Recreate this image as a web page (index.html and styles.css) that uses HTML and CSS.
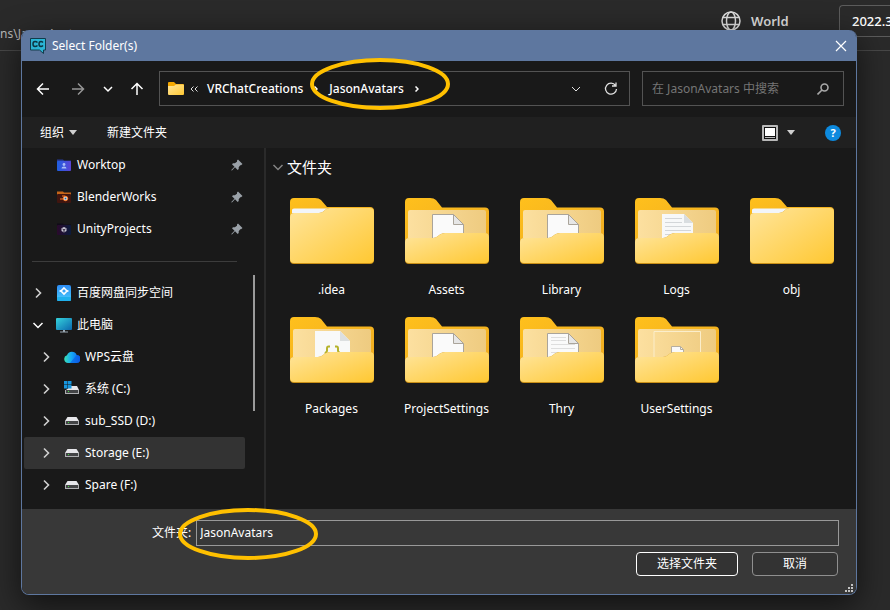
FILE: index.html
```html
<!DOCTYPE html>
<html lang="zh-CN">
<head>
<meta charset="utf-8">
<title>Select Folder(s)</title>
<link rel="stylesheet" href="styles.css">
</head>
<body>
<svg class="defs" width="0" height="0" aria-hidden="true">
  <defs>
    <linearGradient id="front" x1="0" y1="0" x2="1" y2="1"><stop offset="0" stop-color="#ffe59c"/><stop offset="1" stop-color="#ffc832"/></linearGradient>
    <linearGradient id="back" x1="0" y1="0" x2="1" y2="1"><stop offset="0" stop-color="#ffc01c"/><stop offset="1" stop-color="#eeab22"/></linearGradient>
    <linearGradient id="inner" x1="0" y1="0" x2="1" y2="0"><stop offset="0" stop-color="#fce0a0"/><stop offset="1" stop-color="#eecb80"/></linearGradient>
    <linearGradient id="screen" x1="0" y1="0" x2="1" y2="1"><stop offset="0" stop-color="#35d3dc"/><stop offset="1" stop-color="#0b67ae"/></linearGradient>
    <linearGradient id="sync" x1="0" y1="0" x2="0" y2="1"><stop offset="0" stop-color="#2c8cf5"/><stop offset="1" stop-color="#4ccdfb"/></linearGradient>
    <linearGradient id="cloud" x1="0" y1="0" x2="1" y2="0"><stop offset="0" stop-color="#39e0b4"/><stop offset=".45" stop-color="#16a9f5"/><stop offset="1" stop-color="#0b5ce8"/></linearGradient>
    <linearGradient id="work" x1="0" y1="0" x2="1" y2="0"><stop offset="0" stop-color="#1f5fe0"/><stop offset="1" stop-color="#5b45d6"/></linearGradient>
    <linearGradient id="unity" x1="0" y1="0" x2="1" y2="0"><stop offset="0" stop-color="#2a0a2c"/><stop offset="1" stop-color="#0c1a3c"/></linearGradient>
  </defs>
  <symbol id="folder-back" viewBox="0 0 84 66">
    <path d="M0 4Q0 0 4 0H25Q29 0 31 2L37 9.500H80Q84 9.500 84 13.500V50H0Z" fill="url(#back)"/>
    <path d="M3 42V14Q3 12 5 12H79Q81 12 81 14V42Z" fill="url(#inner)"/>
  </symbol>
  <symbol id="folder-front" viewBox="0 0 84 66">
    <path d="M0 44Q0 40 4 40H28Q31 40 33 38L35 36.500Q37 35 40 35H80Q84 35 84 39V62Q84 66 80 66H4Q0 66 0 62Z" fill="#c98f17"/>
    <path d="M0 44Q0 40 4 40H28Q31 40 33 38L35 36.500Q37 35 40 35H80Q84 35 84 39V61Q84 65 80 65H4Q0 65 0 61Z" fill="url(#front)"/>
  </symbol>
  <symbol id="folder-closed" viewBox="0 0 84 66">
    <path d="M0 4Q0 0 4 0H25Q29 0 31 2L37 9H80Q84 9 84 13V30H0Z" fill="url(#back)"/>
    <path d="M2 20V12Q2 10.500 4 10.500H38L34 18Z" fill="#f2f5fa"/>
    <path d="M0 19Q0 15 4 15H29Q32 15 34 13L35 12Q37 10 40 10H80Q84 10 84 14V62Q84 66 80 66H4Q0 66 0 62Z" fill="#c98f17"/>
    <path d="M0 19Q0 15 4 15H29Q32 15 34 13L35 12Q37 10 40 10H80Q84 10 84 14V61Q84 65 80 65H4Q0 65 0 61Z" fill="url(#front)"/>
  </symbol>
  <symbol id="sheet" viewBox="0 0 84 66">
    <path d="M27.500 42V16.500H48.500L58.500 26.500V42Z" fill="#fafafa" stroke="#aaa49a"/>
    <path d="M48.500 16.500V26.500H58.500Z" fill="#e6e6e6" stroke="#aaa49a"/>
  </symbol>
  <symbol id="drive" viewBox="0 0 16 16">
    <path d="M3.500 4H12.500L15 8H1Z" fill="#e6e6ea"/><rect x="1" y="8" width="14" height="4" fill="#aeafb2"/><rect x="2" y="8" width="12" height="3" fill="#434446"/><rect x="4" y="9" width="1" height="1" fill="#3fe03f"/>
  </symbol>
  <symbol id="pin" viewBox="0 0 12 12">
    <path d="M7 .500L11.500 5L10 6.200H9.200L7.700 8.200V10L6.700 11L4 8.300L1.200 11.300L.300 11.500L.500 10.700L3.500 7.800L1 5.300L2 4.300H3.800L6 2.700V1.500Z" fill="#9aa1a8"/>
  </symbol>
  <symbol id="chev-right" viewBox="0 0 12 12"><path d="M4 1.500L8.500 6L4 10.500" fill="none" stroke="#d0d0d0" stroke-width="1.600"/></symbol>
  <symbol id="chev-down" viewBox="0 0 12 12"><path d="M1.500 4L6 8.500L10.500 4" fill="none" stroke="currentColor" stroke-width="1.500"/></symbol>
</svg>

<header class="app-bar">
  <span class="app-path">ns\JasonAvatars</span>
  <div class="app-tools">
    <svg class="globe" viewBox="0 0 20 20" aria-hidden="true"><g fill="none" stroke="#dcdcdc" stroke-width="1.500"><circle cx="10" cy="10" r="9"/><ellipse cx="10" cy="10" rx="4.500" ry="9"/><path d="M2 6.500H18M2 13.500H18"/></g></svg>
    <span class="app-kind">World</span>
    <button class="version" type="button">2022.3</button>
  </div>
</header>

<main class="dialog" role="dialog" aria-labelledby="dialog-title">
  <div class="titlebar">
    <svg class="logo" viewBox="0 0 16 16" aria-hidden="true"><path d="M.500 .500H15.500V12H13.500V15.500L9.500 12H.500Z" fill="#2bb4d4" stroke="#123c4c"/><path d="M7.500 4.500Q6.500 3.500 5 3.500Q3 3.500 3 6T5 8.500Q6.500 8.500 7.500 7.500M13 4.500Q12 3.500 11 3.500Q9 3.500 9 6T11 8.500Q12 8.500 13 7.500" fill="none" stroke="#0d3542" stroke-width="1.500"/></svg>
    <h1 id="dialog-title">Select Folder(s)</h1>
    <button class="close" type="button" aria-label="关闭"><svg viewBox="0 0 12 12"><path d="M1 1L11 11M11 1L1 11" stroke="#fff" stroke-width="1.200"/></svg></button>
  </div>

  <div class="navbar">
    <div class="nav-buttons">
      <button class="nav-back" type="button" aria-label="后退"><svg viewBox="0 0 14 14"><path d="M13 7H1.500M7 1.500L1.500 7L7 12.500"/></svg></button>
      <button class="nav-next" type="button" aria-label="前进"><svg viewBox="0 0 14 14"><path d="M1 7H12.500M7 1.500L12.500 7L7 12.500"/></svg></button>
      <button class="nav-recent" type="button" aria-label="最近位置"><svg viewBox="0 0 14 14"><path d="M3 5L7 9L11 5"/></svg></button>
      <button class="nav-up" type="button" aria-label="上移"><svg viewBox="0 0 14 14"><path d="M7 13V1.500M1.500 7L7 1.500L12.500 7"/></svg></button>
    </div>
    <div class="address">
      <svg class="mini-folder" viewBox="0 0 16 13" aria-hidden="true"><path d="M0 1Q0 0 1 0H6L8 2H15Q16 2 16 3V8H0Z" fill="#f5a800"/><path d="M0 4H6L8 2.500H15Q16 2.500 16 3.500V12Q16 13 15 13H1Q0 13 0 12Z" fill="url(#front)"/></svg>
      <svg class="more" viewBox="0 0 8 6" aria-hidden="true"><path d="M3.500 .500L1 3L3.500 5.500M7.500 .500L5 3L7.500 5.500"/></svg>
      <a class="crumb" href="#">VRChatCreations</a>
      <svg class="sep" viewBox="0 0 4 6" aria-hidden="true"><path d="M.500 .500L3 3L.500 5.500"/></svg>
      <a class="crumb" href="#">JasonAvatars</a>
      <svg class="sep" viewBox="0 0 4 6" aria-hidden="true"><path d="M.500 .500L3 3L.500 5.500"/></svg>
      <button class="history" type="button" aria-label="以前的位置"><svg viewBox="0 0 12 12"><path d="M2 4L6 8L10 4"/></svg></button>
      <button class="refresh" type="button" aria-label="刷新"><svg viewBox="0 0 14 14"><path d="M11.500 3.500A5.500 5.500 0 1 0 12.500 7M8 4H12V.500"/></svg></button>
      <svg class="mark mark-address" viewBox="0 0 140 52" aria-hidden="true"><ellipse cx="70" cy="26" rx="68" ry="24"/></svg>
    </div>
    <label class="search">
      <input type="search" placeholder="在 JasonAvatars 中搜索" aria-label="搜索">
      <svg viewBox="0 0 12 12" aria-hidden="true"><circle cx="7.500" cy="4.500" r="3.500"/><path d="M5 7L.500 11.500"/></svg>
    </label>
  </div>

  <div class="toolbar">
    <button class="organize" type="button">组织 <span class="caret"></span></button>
    <button class="new-folder" type="button">新建文件夹</button>
    <button class="view" type="button" aria-label="更改视图"><svg viewBox="0 0 16 16"><rect width="16" height="16" rx="1" fill="#b8b8b8"/><rect x="2" y="2" width="12" height="12" fill="#111"/><rect x="3" y="3" width="10" height="8" fill="#fff"/><rect x="3" y="12" width="10" height="1" fill="#b8b8b8"/></svg><span class="caret"></span></button>
    <button class="help" type="button" aria-label="帮助">?</button>
  </div>

  <div class="body">
    <nav class="sidebar">
      <ul class="tree">
        <li class="row pinned"><svg class="ico" viewBox="0 0 16 16"><path d="M1 2.500H7L8 3.500H15V8H1Z" fill="#273b98"/><rect x="1" y="4" width="14" height="10" rx="1" fill="url(#work)"/><circle cx="8" cy="7.500" r="1.400" fill="#a9bdf5"/><path d="M5.500 11.500Q5.500 9.500 8 9.500T10.500 11.500Z" fill="#a9bdf5"/></svg><span>Worktop</span><svg class="pin"><use href="#pin"/></svg></li>
        <li class="row pinned"><svg class="ico" viewBox="0 0 16 16"><path d="M1 2.500H7L8 3.500H15V6H1Z" fill="#c56518"/><rect x="1" y="5" width="14" height="9" rx="1" fill="#40150f"/><path d="M4 10H7M6 7H9" stroke="#ff7a22" stroke-width="1.200" fill="none"/><circle cx="9.500" cy="9.500" r="2.200" fill="#e8eef5" stroke="#ff7a22"/><circle cx="9.500" cy="9.500" r="1" fill="#256a9e"/></svg><span>BlenderWorks</span><svg class="pin"><use href="#pin"/></svg></li>
        <li class="row pinned"><svg class="ico" viewBox="0 0 16 16"><path d="M1 2.500H7L8 3.500H15V8H1Z" fill="#100b19"/><rect x="1" y="4" width="14" height="10" rx="1" fill="url(#unity)"/><path d="M8 6L10.500 7.200V10L8 11.500L5.500 10V7.200Z" fill="#c9c6d4"/><path d="M8 9V11M8 9L6.500 8M8 9L9.500 8" stroke="#2a2036"/></svg><span>UnityProjects</span><svg class="pin"><use href="#pin"/></svg></li>
        <li class="rule" role="separator"></li>
        <li class="row"><svg class="arrow"><use href="#chev-right"/></svg><svg class="ico" viewBox="0 0 16 16"><rect x="1" y="0" width="14" height="16" rx="2" fill="url(#sync)"/><rect x="1" y="12" width="14" height="4" rx="1" fill="#20b0ec"/><path d="M8 3L11 6L8 9L5 6Z" fill="none" stroke="#fff" stroke-width="1.600"/><path d="M3.500 6H5M11 6H12.500" stroke="#fff" stroke-width="1.500"/></svg><span>百度网盘同步空间</span></li>
        <li class="row"><svg class="arrow"><use href="#chev-down"/></svg><svg class="ico" viewBox="0 0 16 16"><rect x="0" y="1" width="16" height="12" rx="1" fill="url(#screen)"/><path d="M7 13H9V14.500H12V15.500H4V14.500H7Z" fill="#9aa8b4"/></svg><span>此电脑</span></li>
        <li class="row child"><svg class="arrow"><use href="#chev-right"/></svg><svg class="ico" viewBox="0 0 16 16"><path d="M4 14A4 4 0 0 1 3 6.200A5.200 5.200 0 0 1 12.700 6A4 4 0 0 1 12 14Z" fill="url(#cloud)"/><path d="M6 14L12.700 6A4 4 0 0 1 12 14Z" fill="#0a5ae6" opacity=".6"/></svg><span>WPS云盘</span></li>
        <li class="row child"><svg class="arrow"><use href="#chev-right"/></svg><svg class="ico" viewBox="0 0 16 16"><path d="M7 5H13L15 9H2Z" fill="#e6e6ea"/><rect x="1" y="9" width="14" height="4" fill="#aeafb2"/><rect x="2" y="9" width="12" height="3" fill="#434446"/><rect x="4" y="10" width="1" height="1" fill="#3fe03f"/><path d="M0 0H3.500V3.500H0ZM4 0H7.500V3.500H4ZM0 4H3.500V7.500H0ZM4 4H7.500V7.500H4Z" fill="#1795dd"/></svg><span>系统 (C:)</span></li>
        <li class="row child"><svg class="arrow"><use href="#chev-right"/></svg><svg class="ico"><use href="#drive"/></svg><span>sub_SSD (D:)</span></li>
        <li class="row child selected"><svg class="arrow"><use href="#chev-right"/></svg><svg class="ico"><use href="#drive"/></svg><span>Storage (E:)</span></li>
        <li class="row child"><svg class="arrow"><use href="#chev-right"/></svg><svg class="ico"><use href="#drive"/></svg><span>Spare (F:)</span></li>
      </ul>
      <div class="scroll"><div class="thumb"></div></div>
    </nav>

    <section class="content">
      <h2><svg viewBox="0 0 12 12" aria-hidden="true"><use href="#chev-down"/></svg>文件夹</h2>
      <ul class="tiles">
        <li><svg><use href="#folder-closed"/></svg><span>.idea</span></li>
        <li><svg viewBox="0 0 84 66"><use href="#folder-back"/><use href="#sheet"/><use href="#folder-front"/></svg><span>Assets</span></li>
        <li><svg viewBox="0 0 84 66"><use href="#folder-back"/><use href="#sheet"/><use href="#folder-front"/></svg><span>Library</span></li>
        <li><svg viewBox="0 0 84 66"><use href="#folder-back"/><path d="M27 42V16H49L58 25V42Z" fill="#f7f8f9"/><path d="M49 16V25H58Z" fill="#d9dde0"/><path d="M30 20.500H47M30 24.500H47M30 28.500H56M30 32.500H56M30 36.500H56" stroke="#d3d6d9"/><use href="#folder-front"/></svg><span>Logs</span></li>
        <li><svg><use href="#folder-closed"/></svg><span>obj</span></li>
        <li><svg viewBox="0 0 84 66"><use href="#folder-back"/><path d="M25 42V14H50L60 24V42Z" fill="#f8f9f9"/><path d="M50 14V24H60Z" fill="#dcdfe0"/><path d="M40 29.500H38.500Q37 29.500 37 31.500V34L35.500 36L37 38M45 29.500H46.500Q48 29.500 48 31.500V34L49.500 36L48 38" fill="none" stroke="#b5b32c" stroke-width="2"/><use href="#folder-front"/></svg><span>Packages</span></li>
        <li><svg viewBox="0 0 84 66"><use href="#folder-back"/><use href="#sheet"/><use href="#folder-front"/></svg><span>ProjectSettings</span></li>
        <li><svg viewBox="0 0 84 66"><use href="#folder-back"/><use href="#sheet"/><path d="M31 20.500H46M31 23.500H46M31 27.500H55M31 31.500H55M31 35.500H55" stroke="#dedede"/><use href="#folder-front"/></svg><span>Thry</span></li>
        <li><svg viewBox="0 0 84 66"><use href="#folder-back"/><path d="M19 42V14.500H65.500V42" fill="none" stroke="#fbeecb"/><path d="M36.500 40V29.500H45.500L48.500 32.500V40Z" fill="#fafafa" stroke="#b5aea0"/><path d="M45.500 29.500V32.500H48.500" fill="none" stroke="#b5aea0"/><use href="#folder-front"/></svg><span>UserSettings</span></li>
      </ul>
    </section>
  </div>

  <form class="footer">
    <div class="name-row">
      <label for="folder-name">文件夹:</label>
      <input id="folder-name" type="text" value="JasonAvatars">
      <svg class="mark mark-name" viewBox="0 0 140 52" aria-hidden="true"><ellipse cx="70" cy="26" rx="68" ry="24"/></svg>
    </div>
    <div class="actions">
      <button class="primary" type="button">选择文件夹</button>
      <button class="cancel" type="button">取消</button>
    </div>
    <svg class="grip" viewBox="0 0 8 8" aria-hidden="true"><path d="M6 0H8V2H6ZM3 3H5V5H3ZM6 3H8V5H6ZM0 6H2V8H0ZM3 6H5V8H3ZM6 6H8V8H6Z" fill="#c4c4c4"/></svg>
  </form>
</main>
</body>
</html>
```
FILE: styles.css
```css
* {
  box-sizing: border-box;
}

body {
  margin: 0;
  min-height: 100vh;
  overflow: hidden;
  background: #2a2a2a;
  color: #fff;
  font: 12px/16px "Noto Sans", "Noto Sans CJK SC", sans-serif;
}

ul,
h1,
h2 {
  margin: 0;
  padding: 0;
  list-style: none;
  font-weight: 400;
}

button,
input {
  margin: 0;
  padding: 0;
  border: 0;
  background: none;
  color: inherit;
  font: inherit;
}

svg {
  display: block;
  flex: none;
}

.defs {
  position: absolute;
}

/* Window behind the dialog */
.app-bar {
  display: flex;
  justify-content: space-between;
  height: 51px;
  overflow: hidden;
  border-bottom: 1px solid #484848;
}

.app-path {
  padding-top: 26px;
  color: #b8b8b8;
}

.app-tools {
  display: flex;
  align-items: center;
  height: 42px;
}

.globe {
  width: 20px;
  height: 20px;
  margin-right: 10px;
}

.app-kind {
  width: 88px;
  color: #dcdcdc;
  font-size: 13px;
  font-weight: 600;
}

.version {
  width: 51px;
  height: 32px;
  padding-left: 12px;
  border: 1px solid #5c5c5c;
  border-right: 0;
  border-radius: 4px 0 0 4px;
  font-size: 13px;
  font-weight: 500;
  text-align: left;
}

/* Dialog */
.dialog {
  position: absolute;
  inset: 30px 33px 15px 21px;
  display: flex;
  flex-direction: column;
  border: 1px solid #5e779f;
  border-top: 0;
  border-radius: 8px;
  background: #191919;
  box-shadow: 0 10px 32px rgba(0, 0, 0, 0.6);
}

.titlebar {
  display: flex;
  align-items: center;
  gap: 6px;
  height: 31px;
  padding: 0 7px 0 8px;
  border-radius: 7px 7px 0 0;
  background: #5e779f;
}

.titlebar h1 {
  flex: 1;
  font-size: 12px;
}

.logo {
  width: 16px;
  height: 16px;
}

.close svg {
  width: 12px;
  height: 12px;
  margin: 2px;
}

.navbar {
  display: flex;
  padding: 10px 12px 11px 3px;
}

.nav-buttons {
  display: flex;
  margin-right: 6px;
}

.nav-buttons button {
  display: grid;
  place-items: center;
  height: 35px;
}

.nav-buttons svg {
  width: 14px;
  height: 14px;
  fill: none;
  stroke: #fff;
  stroke-width: 1.5;
}

.nav-back {
  width: 36px;
}

.nav-next {
  width: 34px;
}

.nav-buttons .nav-next svg {
  stroke: #969696;
}

.nav-recent {
  width: 26px;
}

.nav-up {
  width: 32px;
}

.address {
  position: relative;
  display: flex;
  flex: 1;
  align-items: center;
  height: 35px;
  padding: 0 11px 0 8px;
  border: 1px solid #535353;
}

.mini-folder {
  width: 16px;
  height: 13px;
  margin-right: 6px;
}

.address path {
  fill: none;
  stroke: #e0e0e0;
}

.address .mini-folder path {
  stroke: none;
  fill: #f5a800;
}

.address .mini-folder path + path {
  fill: url(#front);
}

.more {
  width: 8px;
  height: 6px;
  margin-right: 9px;
}

.crumb {
  color: #fff;
  font-weight: 500;
  text-decoration: none;
}

.sep {
  width: 4px;
  height: 6px;
  margin: 0 11px;
}

.address .sep path {
  stroke: #fff;
  stroke-width: 1.5;
}

.history {
  margin-left: auto;
}

.history svg {
  width: 12px;
  height: 12px;
}

.refresh {
  margin-left: 22px;
}

.refresh svg {
  width: 14px;
  height: 14px;
}

.refresh path {
  stroke-width: 1.3;
}

.search {
  display: flex;
  align-items: center;
  width: 202px;
  height: 35px;
  margin-left: 12px;
  padding: 0 14px 0 9px;
  border: 1px solid #535353;
}

.search input {
  flex: 1;
  min-width: 0;
  outline: 0;
}

.search input::placeholder {
  color: #757575;
}

.search svg {
  width: 12px;
  height: 12px;
  fill: none;
  stroke: #a8a8a8;
  stroke-width: 1.6;
}

.toolbar {
  display: flex;
  align-items: center;
  height: 31px;
  padding: 0 15px 0 18px;
  background: #202020;
}

.toolbar button {
  display: flex;
  align-items: center;
}

.caret {
  border: 4px solid transparent;
  border-top: 5px solid #d0d0d0;
  border-bottom: 0;
}

.organize {
  gap: 5px;
  margin-right: 30px;
}

.view {
  gap: 9px;
  margin-left: auto;
}

.view svg {
  width: 16px;
  height: 16px;
}

.toolbar .help {
  justify-content: center;
  width: 16px;
  height: 16px;
  margin-left: 30px;
  border-radius: 50%;
  background: #0d8ade;
  font-size: 11px;
  font-weight: 700;
}

.body {
  display: flex;
  flex: 1;
  min-height: 0;
}

.sidebar {
  display: flex;
  width: 244px;
  padding: 1px 9px 0 2px;
  border-right: 2px solid #2a2a2a;
}

.tree {
  flex: 1;
}

.row {
  display: flex;
  align-items: center;
  height: 32px;
  padding: 0 2px 0 8px;
}

.pinned {
  padding-left: 32px;
}

.child {
  padding-left: 16px;
}

.selected {
  border-radius: 2px;
  background: #333;
}

.arrow {
  width: 12px;
  height: 12px;
  margin-right: 12px;
}

.ico {
  width: 16px;
  height: 16px;
  margin-right: 5px;
}

.pin {
  width: 12px;
  height: 12px;
  margin-left: auto;
}

.rule {
  height: 32px;
  padding: 16px 8px 0;
}

.rule::before {
  display: block;
  height: 1px;
  background: #3c3c3c;
  content: "";
}

.scroll {
  width: 10px;
  padding: 126px 0 0 8px;
}

.thumb {
  width: 2px;
  height: 136px;
  background: #9a9a9a;
}

.content {
  flex: 1;
  padding: 7px 0 0 6px;
}

.content h2 {
  display: flex;
  align-items: center;
  gap: 3px;
  height: 24px;
  font-size: 15px;
}

.content h2 svg {
  width: 12px;
  height: 12px;
  color: #858585;
}

.tiles {
  display: grid;
  grid-template-columns: repeat(auto-fill, 115px);
  grid-auto-rows: 119px;
  margin: 19px 0 0 2px;
}

.tiles li {
  display: flex;
  flex-direction: column;
  align-items: center;
  gap: 18px;
}

.tiles svg {
  width: 84px;
  height: 66px;
}

/* Folder name and actions */
.footer {
  position: relative;
  height: 85px;
  padding: 11px 17px 0 130px;
  border-radius: 0 0 7px 7px;
  background: #383838;
}

.name-row {
  position: relative;
  display: flex;
  align-items: center;
  gap: 5px;
}

.name-row input {
  flex: 1;
  height: 26px;
  padding: 0 3px 2px;
  border: 1px solid #999;
}

.actions {
  display: flex;
  justify-content: flex-end;
  gap: 14px;
  padding: 6px 1px 0 0;
}

.actions button {
  height: 24px;
  border: 1px solid #8f8f8f;
  border-radius: 4px;
  background: #333;
}

.actions .primary {
  width: 102px;
  border-color: #fff;
}

.actions .cancel {
  width: 86px;
}

.grip {
  position: absolute;
  right: 3px;
  bottom: 2px;
  width: 8px;
  height: 8px;
}

/* Highlight rings */
.mark {
  position: absolute;
  width: 140px;
  height: 52px;
  fill: none;
  stroke: #ffc000;
  stroke-width: 4;
  pointer-events: none;
}

.mark-address {
  top: -14px;
  left: 150px;
}

.mark-name {
  top: -12px;
  left: 26px;
}
```
